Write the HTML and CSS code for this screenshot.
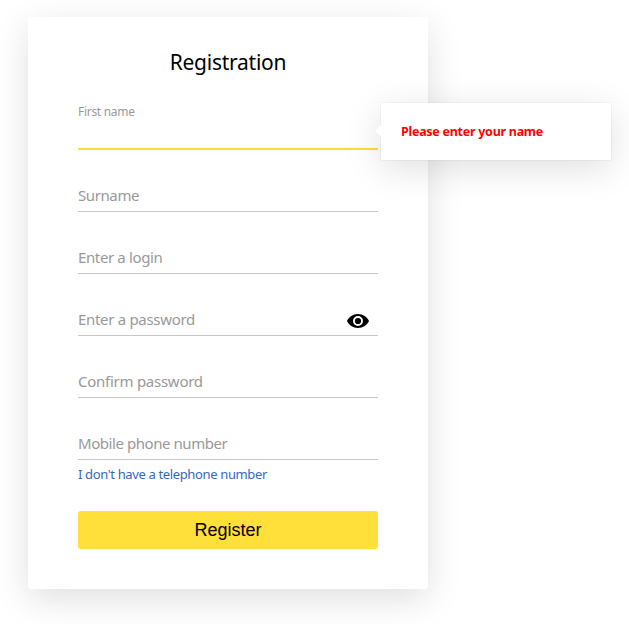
FILE: index.html
```html
<!DOCTYPE html>
<html lang="en">
<head>
<meta charset="utf-8">
<title>Registration</title>
<link rel="stylesheet" href="styles.css">
</head>
<body>
<form class="card">
  <h1 class="title"><span class="t-title">Registration</span></h1>
  <div class="field active">
    <label class="hint"><span class="t-hint">First name</span></label>
    <div class="tooltip"><span class="t-error">Please enter your name</span></div>
  </div>
  <div class="field"><span class="t-surname">Surname</span></div>
  <div class="field"><span class="t-login">Enter a login</span></div>
  <div class="field"><span class="t-password">Enter a password</span>
    <svg class="eye" width="22" height="14" viewBox="0 0 22 14"><path fill-rule="evenodd" d="M11 0C6 0 1.900 2.900 0 7c1.900 4.100 6 7 11 7s9.100-2.900 11-7c-1.900-4.100-6-7-11-7zM11 2a5 5 0 1 1 0 10a5 5 0 0 1 0-10z"/><circle cx="11" cy="7" r="3.100"/></svg>
  </div>
  <div class="field"><span class="t-confirm">Confirm password</span></div>
  <div class="field"><span class="t-phone">Mobile phone number</span></div>
  <a class="link"><span class="t-link">I don't have a telephone number</span></a>
  <button class="register" type="button"><span class="t-register">Register</span></button>
</form>
</body>
</html>
```
FILE: styles.css
```css
* { box-sizing: border-box; }
body { margin: 0; height: 624px; overflow: hidden; background: #fff; font-family: "Noto Sans", sans-serif; }
.card { width: 400px; height: 572px; margin: 17px 0 0 28px; padding: 30px 50px 0; background: #fff; border-radius: 3px; box-shadow: 0 10px 35px rgba(0,0,0,.125); }
.title { margin: 0 0 25px; height: 32px; line-height: 31px; font-size: 21px; font-weight: 400; text-align: center; }
span { display: inline-block; white-space: nowrap; }
.field { position: relative; height: 32px; margin-bottom: 30px; border-bottom: 1px solid #c8c8c8; font-size: 15px; line-height: 30px; color: #999; }
.active { height: 46px; border-bottom: 2px solid #ffdc32; }
.hint { display: block; font-size: 12px; line-height: 16px; }
.tooltip { position: absolute; left: 303px; top: -1px; width: 230px; height: 57px; padding-left: 20px; background: #fff; border-radius: 1px; box-shadow: 0 0 0 1px rgba(0,0,0,.03), 0 8px 36px rgba(0,0,0,.13); color: #f00; font-size: 12.500px; font-weight: 700; line-height: 57px; }
.tooltip::before { content: ""; position: absolute; left: -4px; top: 23px; width: 10px; height: 10px; background: #fff; transform: rotate(45deg); }
.t-title { letter-spacing: -.25px; }
.t-hint { letter-spacing: -.29px; }
.t-error { letter-spacing: -.27px; }
.t-surname { letter-spacing: -.4px; }
.t-login { letter-spacing: -.37px; }
.t-password { letter-spacing: -.31px; }
.t-confirm { letter-spacing: -.26px; }
.t-phone { letter-spacing: -.44px; }
.t-link { letter-spacing: -.36px; }
.eye { position: absolute; left: 269px; top: 10px; }
.link { display: block; margin-top: -26px; height: 20px; line-height: 20px; font-size: 13px; color: #3568c0; }
.register { display: block; width: 300px; height: 38px; margin-top: 27px; padding: 0; border: 0; border-radius: 3px; background: #ffdf3a; color: #000; font: 18px/38px "Liberation Sans", sans-serif; }
```
